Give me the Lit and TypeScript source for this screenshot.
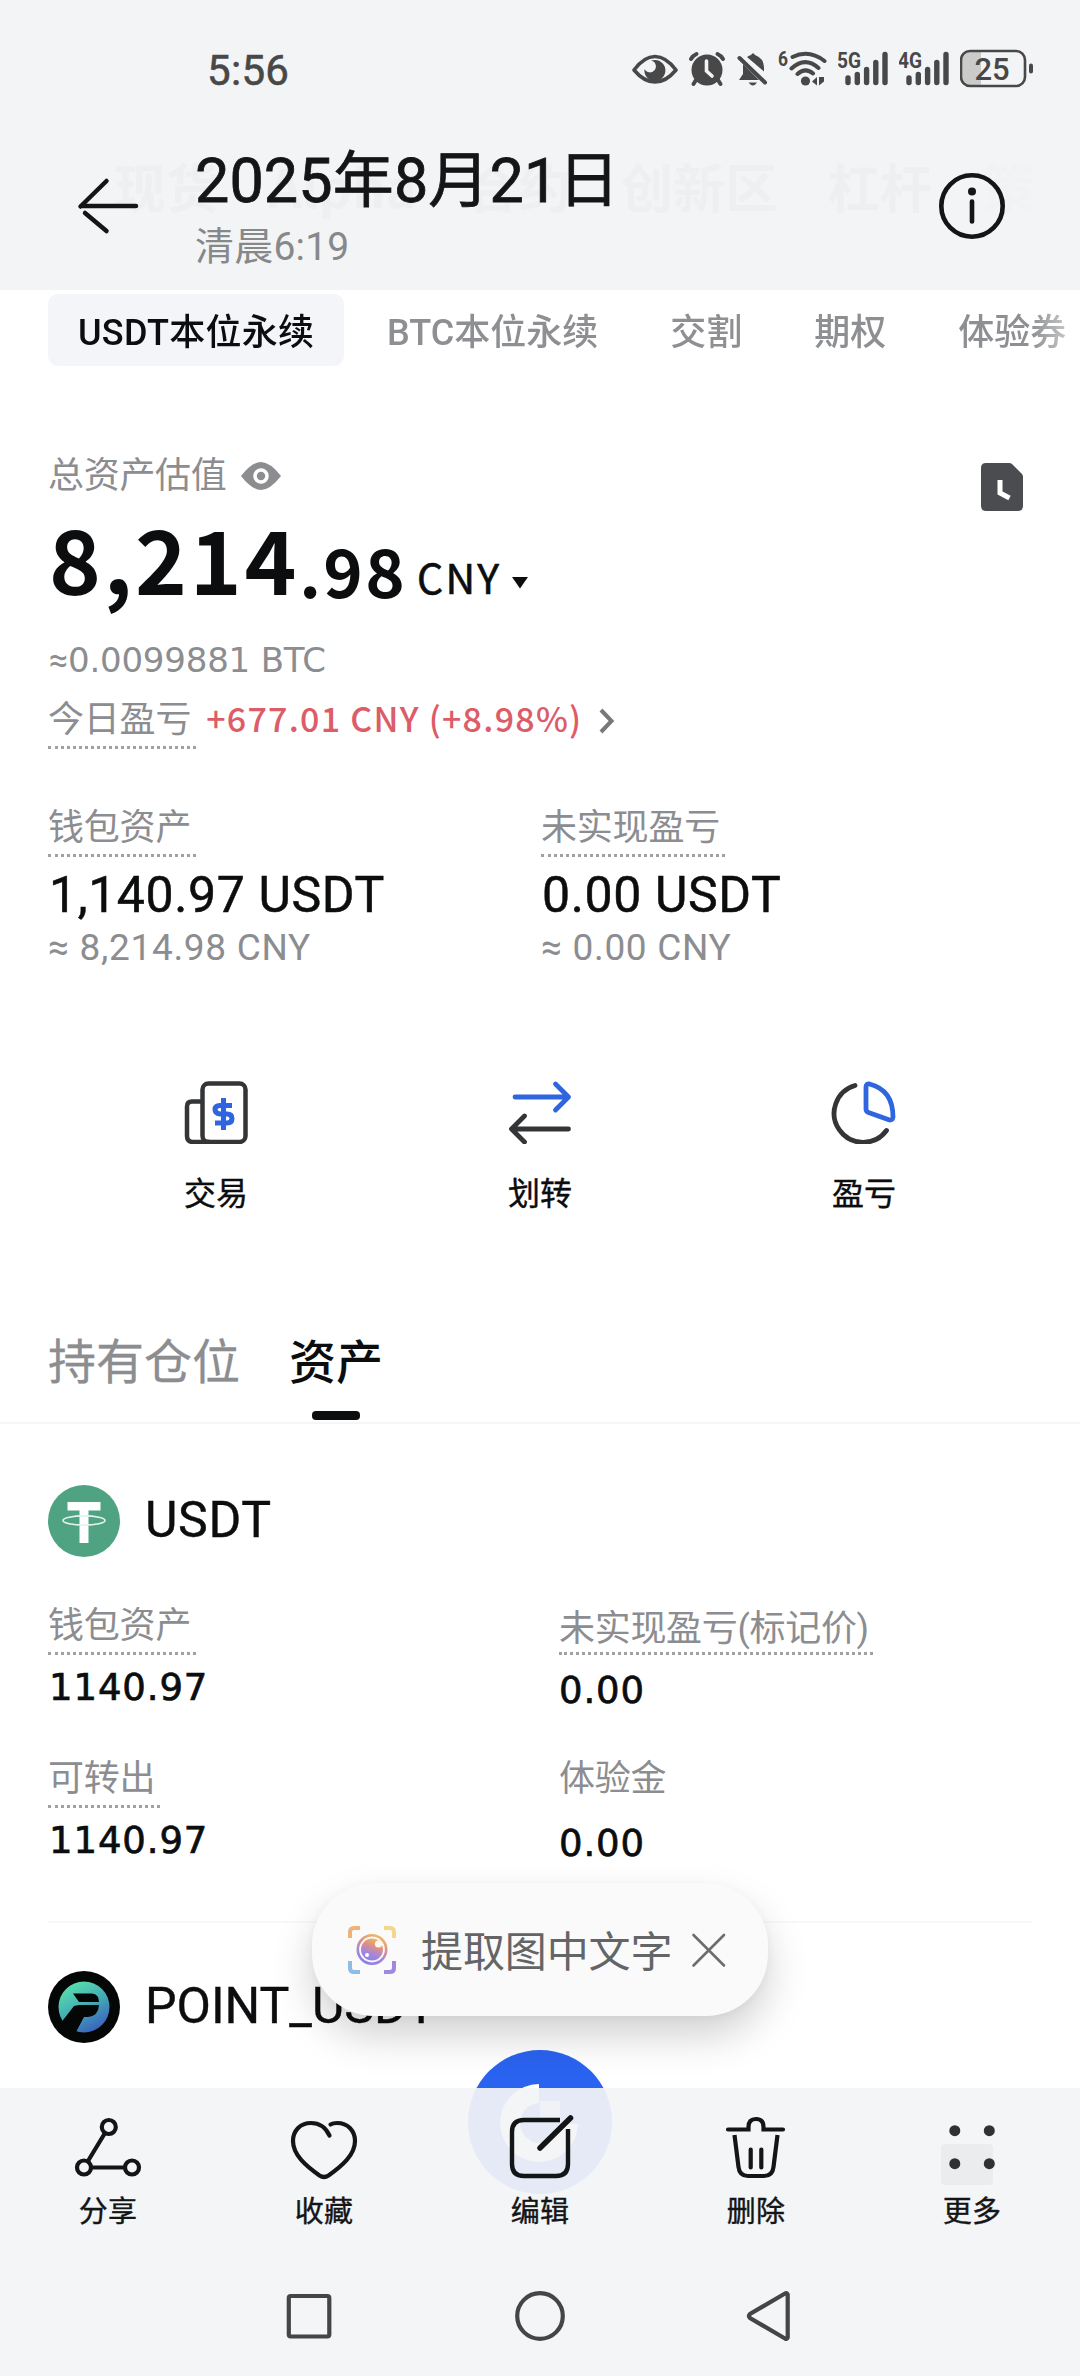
import { LitElement, html, svg, css } from "lit";
import { customElement, property } from "lit/decorators.js";

/** Builds an icon whose drawing units are page pixels, starting at (x, y). */
const icon = (x: number, y: number, w: number, h: number, body: unknown) =>
  html`<svg width=${w} height=${h} viewBox="${x} ${y} ${w} ${h}" aria-hidden="true">${body}</svg>`;

const signal = (x: number, label: string) => svg`
  <text x=${x - 1} y="68" font-size="22" font-weight="700" textLength="24" lengthAdjust="spacingAndGlyphs"
    font-family="Roboto, sans-serif" fill="#484848">${label}</text>
  <g stroke="#484848" stroke-width="5.4" stroke-linecap="round">
    <path d="M${x + 10} 78V82.500M${x + 19.3} 74.500V82.500M${x + 28.6} 69.500V82.500M${x + 37.8} 62.500V82.500M${x + 47} 54.500V82.500"/>
  </g>`;

@customElement("status-bar")
export class StatusBar extends LitElement {
  static styles = css`
    :host { display: flex; height: 138px; padding: 0 46px 0 207px; box-sizing: border-box; justify-content: space-between; }
    svg { display: block; flex: none; }
    .time { font-size: 42px; line-height: 50px; margin-top: 46px; color: #484848; letter-spacing: 0.3px; -webkit-text-stroke: 0.6px #484848; }
    .icons { display: flex; margin-top: 48px; gap: 10px; height: 42px; }
  `;
  render() {
    return html`
      <div class="time">5:56</div>
      <div class="icons">
        ${icon(632, 48, 46, 42, svg`
          <path d="M634 70Q644 56.500 655 56.500T676 70Q666 82 655 82T634 70Z" fill="none" stroke="#484848" stroke-width="3.600" stroke-linejoin="round"/>
          <path d="M655 60a10.500 10.500 0 1 1-10.500 9a6 6 0 1 0 6.500-8.500Q653 60 655 60Z" fill="#484848"/>`)}
        ${icon(689, 48, 38, 42, svg`
          <circle cx="708" cy="70" r="15.500" fill="#484848"/>
          <path d="M697 80L694.500 84M719 80L721.500 84M692 59Q694 55.500 697.500 54M724 59Q722 55.500 718.500 54" stroke="#484848" stroke-width="4" stroke-linecap="round" fill="none"/>
          <path d="M707.500 61V71L713 76" stroke="#f3f4f6" stroke-width="3.600" stroke-linecap="round" fill="none"/>`)}
        ${icon(737, 48, 32, 42, svg`
          <path d="M744 65V74L740 80H760L744 64Z" fill="#484848"/>
          <path d="M748 57Q750 55.500 752 55Q754 51.500 756 55Q764.500 58 765 67V71.500Z" fill="#484848"/>
          <path d="M740.500 58L766 82.500" stroke="#484848" stroke-width="4" stroke-linecap="round"/>
          <path d="M749.500 82.500H758Q754 88.500 749.500 82.500Z" fill="#484848"/>`)}
        ${icon(777, 48, 50, 42, svg`
          <text x="777" y="66" font-size="20" font-weight="700" textLength="10" lengthAdjust="spacingAndGlyphs" font-family="Roboto, sans-serif" fill="#484848">6</text>
          <g fill="none" stroke="#484848" stroke-width="4" stroke-linecap="round">
            <path d="M791.500 57Q808 49 823.500 61M790.500 68.500Q804 56 817.500 68M796.500 74Q804.500 67 812 73.500"/>
          </g>
          <circle cx="804.500" cy="81" r="4.600" fill="#484848"/>
          <path d="M811 81.500L816 77V85.500ZM818 77V85.500L823 81.500V77Z" fill="#484848"/>`)}
        ${icon(836, 48, 51, 42, signal(836, "5G"))}
        ${icon(898, 48, 51, 42, signal(898, "4G"))}
        ${icon(960, 48, 74, 42, svg`
          <path d="M970 52H981V86H970Q962 86 962 78V60Q962 52 970 52Z" fill="#cbcbca"/>
          <rect x="961" y="51" width="64" height="35" rx="9" fill="none" stroke="#484848" stroke-width="2.600"/>
          <path d="M1031 65.500V71.500" stroke="#484848" stroke-width="4" stroke-linecap="round"/>
          <text x="992" y="80" font-size="31" font-weight="500" text-anchor="middle" font-family="Roboto, sans-serif" fill="#484848">25</text>`)}
      </div>`;
  }
}

@customElement("photo-header")
export class PhotoHeader extends LitElement {
  static styles = css`
    :host { display: flex; height: 152px; padding: 0 75px; box-sizing: border-box; }
    svg { display: block; flex: none; }
    .back { margin: 35px 54px 0 0; }
    .titles { flex: 1; }
    .title { font-size: 61px; line-height: 70px; margin-top: 8px; color: #131517; letter-spacing: 0.15px; white-space: nowrap; -webkit-text-stroke: 0.8px #131517; }
    .sub { font-size: 39px; line-height: 46px; margin-top: 8px; color: #87888a; letter-spacing: 0.2px; }
    .info { margin-top: 34px; }
  `;
  render() {
    return html`
      <div class="back">${icon(75, 173, 66, 66, svg`
        <path d="M81 206H136M106.500 181L80.500 206.500M85 213L106.500 231" fill="none" stroke="#131517" stroke-width="4.500" stroke-linecap="round"/>`)}</div>
      <div class="titles">
        <div class="title">2025年8月21日</div>
        <div class="sub">清晨6:19</div>
      </div>
      <div class="info">${icon(939, 172, 66, 68, svg`
        <circle cx="972" cy="206" r="30.700" fill="none" stroke="#131517" stroke-width="4.600"/>
        <circle cx="972" cy="191.500" r="4" fill="#131517"/>
        <path d="M972 201.500V221.500" stroke="#131517" stroke-width="4.600" stroke-linecap="round"/>`)}</div>`;
  }
}

@customElement("hint-label")
export class HintLabel extends LitElement {
  @property({ type: Boolean }) plain = false;
  @property({ type: Boolean }) low = false;
  static styles = css`
    :host { display: inline-block; vertical-align: top; }
    .label { font-size: 36px; line-height: 40px; height: 40px; padding: 3px 5px 6px 0; color: #8c8d90; white-space: nowrap;
      border-bottom: 3px dotted #a0a1a3; letter-spacing: -0.2px; }
    .plain { border-color: transparent; }
    .low { padding: 6px 4px 3px 0; letter-spacing: -0.3px; }
  `;
  render() {
    return html`<div class="label ${this.plain ? "plain" : ""} ${this.low ? "low" : ""}"><slot></slot></div>`;
  }
}

@customElement("asset-field")
export class AssetField extends LitElement {
  @property() label = "";
  @property() value = "";
  @property({ type: Boolean }) plain = false;
  @property({ type: Boolean }) low = false;
  @property({ type: Boolean, reflect: true }) right = false;
  static styles = css`
    :host { display: block; height: 105px; }
    .value { font: 37px/40px "DejaVu Sans", sans-serif; color: #0c0d0e; margin-top: 13px; padding-left: 1px;
      letter-spacing: 0.9px; -webkit-text-stroke: 0.7px #0c0d0e; }
    :host([right]) .value { margin-top: 16px; padding-left: 0; }
  `;
  render() {
    return html`<hint-label ?plain=${this.plain} ?low=${this.low}>${this.label}</hint-label>
      <div class="value">${this.value}</div>`;
  }
}

@customElement("tool-bar")
export class ToolBar extends LitElement {
  static styles = css`
    :host { display: grid; grid-template-columns: repeat(5, 216px); height: 152px; }
    .item { display: flex; flex-direction: column; align-items: center; padding-top: 22px; }
    svg { display: block; }
    .name { font-size: 29px; line-height: 36px; margin-top: 12px; color: #131517; letter-spacing: 0.3px; -webkit-text-stroke: 0.4px #131517; }
  `;
  render() {
    const items = [
      { name: "分享", art: icon(70, 2110, 76, 72, svg`<g fill="none" stroke="#131517" stroke-width="4.200">
        <circle cx="108.800" cy="2127" r="7"/><circle cx="84" cy="2167.500" r="7"/><circle cx="132" cy="2167.500" r="7"/>
        <path d="M105 2133L87.700 2161.500M91 2167.500H125"/></g>`) },
      { name: "收藏", art: icon(286, 2110, 76, 72, svg`<path d="M329.500 2135.500C326 2128 320 2123 311 2123C300 2123 293 2131 293 2141C293 2155 306 2166 319.500 2175.500Q324 2178.500 328.500 2175.500C342 2166 355 2155 355 2141C355 2131 348 2123 337 2123Q333 2123 330.500 2124.500"
        fill="none" stroke="#131517" stroke-width="4.200" stroke-linecap="round"/>`) },
      { name: "编辑", art: icon(502, 2110, 76, 72, svg`<g fill="none" stroke="#131517" stroke-linecap="round">
        <path d="M560 2120H524Q512 2120 512 2132V2164Q512 2176 524 2176H556Q568 2176 568 2164V2129" stroke-width="4.400" stroke-linecap="butt"/>
        <path d="M540 2148L570.500 2118" stroke-width="5.500"/></g>`) },
      { name: "删除", art: icon(718, 2110, 76, 72, svg`<g fill="none" stroke="#131517" stroke-width="4.200" stroke-linecap="round">
        <path d="M728 2129.500H748.500V2127Q748.500 2119 756 2119T763.500 2127V2129.500H783"/>
        <path d="M734.500 2135L738.500 2167Q739.500 2176 748 2176H764Q772.500 2176 773.500 2167L777.500 2135" stroke-linecap="butt"/>
        <path d="M750.700 2149.500V2167.500M761.300 2149.500V2167.500"/></g>`) },
      { name: "更多", art: icon(934, 2110, 76, 72, svg`<g fill="#2f3133">
        <circle cx="954.800" cy="2130.700" r="5.500"/><circle cx="989.300" cy="2130.700" r="5.500"/>
        <circle cx="954.800" cy="2163.700" r="5.500"/><circle cx="989.300" cy="2163.700" r="5.500"/></g>`) },
    ];
    return items.map((i) => html`<div class="item">${i.art}<div class="name">${i.name}</div></div>`);
  }
}

@customElement("nav-bar")
export class NavBar extends LitElement {
  static styles = css`
    :host { display: flex; height: 136px; padding: 0 280px; justify-content: space-between; align-items: flex-start; }
    svg { display: block; margin-top: 44px; }
  `;
  render() {
    return html`
      ${icon(280, 2284, 60, 64, svg`<rect x="288.800" y="2296" width="40.500" height="40.500" rx="2" fill="none" stroke="#444547" stroke-width="4.200"/>`)}
      ${icon(510, 2284, 60, 64, svg`<circle cx="540" cy="2316" r="22.800" fill="none" stroke="#444547" stroke-width="4.200"/>`)}
      ${icon(740, 2284, 60, 64, svg`<path d="M787.700 2294.500V2337.500Q787 2339.500 785 2338.500L750 2318Q748 2316 750 2314L785 2293.500Q787 2292.500 787.700 2294.500Z" fill="none" stroke="#444547" stroke-width="4.200"/>`)}`;
  }
}

@customElement("scan-toast")
export class ScanToast extends LitElement {
  static styles = css`
    :host { display: flex; align-items: center; box-sizing: border-box; width: 456px; height: 133px; border-radius: 62px;
      background: #fafafa; padding: 0 40px 0 34px; box-shadow: 0 20px 40px rgba(0, 0, 0, 0.18), 0 2px 10px rgba(0, 0, 0, 0.04); }
    svg { display: block; flex: none; }
    .text { font-size: 42px; line-height: 50px; margin: 0 17px 0 23px; padding-top: 6px; color: #646567; letter-spacing: -0.1px; white-space: nowrap; }
  `;
  render() {
    return html`
      ${icon(346, 1925, 52, 52, svg`
        <defs>
          <linearGradient id="lens" x1="0.800" y1="0" x2="0.400" y2="1"><stop offset="0" stop-color="#f0bd62"/><stop offset="0.400" stop-color="#dc8f86"/><stop offset="0.700" stop-color="#a787dc"/><stop offset="1" stop-color="#8f80e6"/></linearGradient>
        </defs>
        <g fill="none" stroke-width="4">
          <path d="M350 1939V1933Q350 1929 354 1929H360" stroke="#eeb27a"/><path d="M384 1929H390Q394 1929 394 1933V1939" stroke="#f3d88c"/>
          <path d="M350 1962V1969Q350 1973 354 1973H360" stroke="#8fbbe6"/><path d="M384 1973H390Q394 1973 394 1969V1962" stroke="#9d8ade"/>
        </g>
        <circle cx="372" cy="1950.500" r="14.200" fill="none" stroke="url(#lens)" stroke-width="2.600"/>
        <circle cx="372" cy="1950.500" r="11" fill="url(#lens)"/>
        <circle cx="378.500" cy="1945" r="3.600" fill="#fff6ea"/><circle cx="367" cy="1956" r="2" fill="#fff"/>`)}
      <div class="text">提取图中文字</div>
      ${icon(688, 1931, 40, 40, svg`<path d="M692.500 1936L723 1966.500M723 1936L692.500 1966.500" stroke="#6c6d6f" stroke-width="2.600" stroke-linecap="round"/>`)}`;
  }
}

@customElement("app-root")
export class AppRoot extends LitElement {
  static styles = css`
    :host { display: block; width: 1080px; height: 2376px; position: relative; overflow: hidden; background: #fff;
      font-family: Roboto, "Noto Sans CJK SC", sans-serif; }
    svg { display: block; flex: none; }
    .top { position: relative; height: 290px; background: #f3f4f6; }
    .under { position: absolute; top: 151px; left: 114px; display: flex; gap: 50px; font: 700 52px/70px "Noto Sans CJK SC", sans-serif;
      color: #eeeff1; white-space: nowrap; letter-spacing: 0.2px; }
    .faint { color: #f1f2f4; }
    .front { position: relative; }
    .content { height: 1798px; }
    .tabs { display: flex; align-items: center; gap: 72px; padding: 4px 0 0 48px; height: 72px; font-size: 36px; color: #8e8f92;
      letter-spacing: 0; white-space: nowrap; overflow: hidden; font-weight: 500;
      -webkit-mask-image: linear-gradient(90deg, #000 1030px, rgba(0,0,0,0.4) 1075px); }
    .chip { height: 72px; line-height: 79px; padding: 0 0 0 30px; margin-right: -29px; border-radius: 10px; background: #f4f5f8; color: #0c0d0e; box-sizing: border-box; width: 296px; flex: none; letter-spacing: 0.3px; }
    .tab { line-height: 42px; padding-top: 5px; }
    .summary { display: flex; justify-content: space-between; padding: 87px 57px 0 48px; }
    .history { margin-top: 10px; }
    .caption { display: flex; align-items: center; gap: 14px; margin-top: 3px; font-size: 36px; line-height: 40px; height: 40px; color: #8c8d90; letter-spacing: -0.3px; }
    .balance { display: flex; margin-top: 16px; height: 90px; font: 700 88px/90px "Noto Sans CJK SC", sans-serif; color: #0c0d0e; white-space: nowrap; letter-spacing: 2.800px; padding-left: 1px; }
    .cents { font-size: 67px; vertical-align: -3px; letter-spacing: 2.300px; }
    .unit { font-size: 41px; font-weight: 400; letter-spacing: 2.200px; margin-left: 10px; -webkit-text-stroke: 0.6px #0c0d0e; vertical-align: 1px; }
    .caret { margin: 65px 0 0 10px; }
    .btc { font: 34px/40px "DejaVu Sans", sans-serif; color: #8c8d90; margin-top: 38px; padding-left: 1px; white-space: nowrap; letter-spacing: -0.2px; }
    .about { font-family: Roboto, sans-serif; }
    .pnl { display: flex; margin-top: 17px; height: 52px; }
    .gain { font: 500 34px/40px "Noto Sans CJK SC", sans-serif; color: #dc5c68; margin: 1px 16px 0 10px; letter-spacing: 1.250px; white-space: nowrap; }
    .wallets { display: grid; grid-template-columns: 493px 1fr; padding-left: 48px; margin-top: 56px; }
    .amount { font-size: 50px; line-height: 50px; margin-top: 13px; padding-left: 1px; color: #0c0d0e; letter-spacing: 0.600px; -webkit-text-stroke: 0.5px #0c0d0e; }
    .approx { font-size: 37px; line-height: 40px; margin-top: 8px; color: #8c8d90; letter-spacing: 0.700px; }
    .actions { display: grid; grid-template-columns: repeat(3, 324px); padding: 0 54px; margin-top: 112px; }
    .action { display: flex; flex-direction: column; align-items: center; color: #0c0d0e; height: 131px; }
    .verb { font-size: 32px; line-height: 40px; margin-top: 30px; -webkit-text-stroke: 0.4px #0c0d0e; }
    .sections { display: flex; gap: 49px; padding: 4px 48px 0; margin-top: 118px; height: 89px; border-bottom: 2px solid #f6f6f7; font-size: 48px; line-height: 60px; color: #8c8d90; -webkit-text-stroke: 0.3px #8c8d90; }
    .current { color: #0c0d0e; font-weight: 500; font-size: 47px; -webkit-text-stroke: 0; }
    .mark { width: 48px; height: 9px; border-radius: 4px; background: #0c0d0e; margin: 18px auto 0; }
    .coin { display: flex; align-items: center; gap: 25px; padding-left: 48px; margin-top: 61px; height: 72px; font-size: 50px; color: #0c0d0e; letter-spacing: 0.700px; -webkit-text-stroke: 0.4px #0c0d0e; }
    .coin-name { margin-top: -3px; }
    .point-name { letter-spacing: 0; }
    .fields { display: grid; grid-template-columns: 511px 1fr; row-gap: 48px; padding-left: 48px; margin-top: 46px; }
    .rule { height: 2px; margin: 60px 48px 48px; background: #f8f8f9; }
    .second { margin-top: 0; }
    .fab { position: absolute; left: 468px; top: 2050px; }
    .ghost { position: absolute; left: 941px; top: 2144px; width: 52px; height: 41px; border-radius: 4px; background: #6f8583; }
    .toast { position: absolute; left: 312px; top: 1883px; }
    .bottom { position: relative; background: rgba(243, 244, 246, 0.93); height: 288px; }
  `;
  render() {
    return html`
      <div class="top">
        <div class="under"><span>现货</span><span>Alpha</span><span>合约</span><span>创新区</span><span>杠杆</span><span class="faint">策</span></div>
        <div class="front"><status-bar></status-bar><photo-header></photo-header></div>
      </div>
      <div class="content">
        <div class="tabs"><div class="chip">USDT本位永续</div>
          ${["BTC本位永续", "交割", "期权", "体验券"].map((t) => html`<div class="tab">${t}</div>`)}
        </div>
        <div class="summary">
          <div>
            <div class="caption">总资产估值 ${icon(241, 461, 40, 30, svg`
              <path d="M241 476Q252 462 261 462T281 476Q270 490 261 490T241 476Z" fill="#8c8d90"/>
              <circle cx="261" cy="476" r="6" fill="none" stroke="#fff" stroke-width="3.600"/>`)}</div>
            <div class="balance"><div>8,214<span class="cents">.98</span><span class="unit">CNY</span></div>
              <div class="caret">${icon(513, 578, 18, 12, svg`<path d="M514 578H530L522 589.500Z" fill="#0c0d0e"/>`)}</div></div>
            <div class="btc"><span class="about">≈</span>0.0099881 BTC</div>
            <div class="pnl"><hint-label>今日盈亏</hint-label><div class="gain">+677.01 CNY (+8.98%)</div>
              ${icon(597, 697, 18, 48, svg`<path d="M600 710L610.500 721L600 732" fill="none" stroke="#77787b" stroke-width="4"/>`)}</div>
          </div>
          <div class="history">${icon(981, 463, 42, 48, svg`
            <path d="M986 463H1009Q1011 463 1012 464L1022 474Q1023 475 1023 477V506Q1023 511 1018 511H986Q981 511 981 506V468Q981 463 986 463Z" fill="#4b4c50"/>
            <path d="M1000 480V493L1009.500 498" fill="none" stroke="#fff" stroke-width="5"/>`)}</div>
        </div>
        <div class="wallets">
          <div><hint-label>钱包资产</hint-label><div class="amount">1,140.97 USDT</div><div class="approx">≈ 8,214.98 CNY</div></div>
          <div><hint-label>未实现盈亏</hint-label><div class="amount">0.00 USDT</div><div class="approx">≈ 0.00 CNY</div></div>
        </div>
        <div class="actions">
          <div class="action">${icon(184, 1080, 64, 64, svg`<g fill="none" stroke="#333537" stroke-width="4.500">
            <rect x="202.500" y="1083.500" width="43" height="58.500" rx="6"/><path d="M202.500 1101.500H192Q187 1101.500 187 1106.500V1136Q187 1142 193 1142H210"/></g>
            <path d="M223.500 1098V1130M232 1105.500H220Q215 1105.500 215 1109.500T220 1114H227Q232 1114 232 1118.500T227 1123H215" fill="none" stroke="#2f66e0" stroke-width="5"/>`)}<div class="verb">交易</div></div>
          <div class="action">${icon(508, 1080, 64, 64, svg`<g fill="none" stroke-width="4.800" stroke-linecap="round" stroke-linejoin="round">
            <path d="M515 1097H568M555.500 1084L568.500 1097L555.500 1110" stroke="#2f66e0"/><path d="M568.500 1129H513M524.500 1116L511.500 1129L524.500 1142" stroke="#333537"/></g>`)}<div class="verb">划转</div></div>
          <div class="action">${icon(831, 1080, 66, 64, svg`<g fill="none" stroke-width="4.800" stroke-linecap="round" stroke-linejoin="round">
            <path d="M855 1085.500A29 29 0 1 0 886.500 1130.500" stroke="#333537"/><path d="M866 1087Q866 1083.500 869.500 1084Q893 1090 893 1117Q892.500 1120.500 889.500 1120L868.500 1112.500Q866 1111.500 866 1109Z" stroke="#2f66e0"/></g>`)}<div class="verb">盈亏</div></div>
        </div>
        <div class="sections"><div>持有仓位</div><div class="current">资产<div class="mark"></div></div></div>
        <div class="coin">${icon(48, 1485, 72, 72, svg`<circle cx="84" cy="1521" r="36" fill="#4fa383" stroke="none"/>
          <path d="M67.500 1502H100.500V1510.500H88.500V1543H79.500V1510.500H67.500Z" fill="#fff" stroke="none"/>
          <ellipse cx="84" cy="1520.500" rx="21" ry="4.600" fill="none" stroke="#e4f3ed" stroke-width="1.600"/>`)}<div class="coin-name">USDT</div></div>
        <div class="fields">
          <asset-field label="钱包资产" value="1140.97"></asset-field>
          <asset-field label="未实现盈亏(标记价)" value="0.00" low right></asset-field>
          <asset-field label="可转出" value="1140.97"></asset-field>
          <asset-field label="体验金" value="0.00" plain right></asset-field>
        </div>
        <div class="rule"></div>
        <div class="coin second">${icon(48, 1971, 72, 72, svg`
          <defs><linearGradient id="pt" x1="0.200" y1="0.100" x2="0.700" y2="1"><stop offset="0" stop-color="#55dcae"/><stop offset="0.500" stop-color="#43a8b4"/><stop offset="1" stop-color="#3a5fc0"/></linearGradient></defs>
          <circle cx="84" cy="2007" r="36" fill="#050606"/><circle cx="84" cy="2007" r="25.500" fill="url(#pt)"/>
          <path d="M73 1993.500H92Q99 1994 99 2002H79ZM79 2005H99Q98.500 2016 88 2017H84L76 2032L60 2024L74 2006Z" fill="#050606"/>`)}<div class="coin-name point-name">POINT_USDT</div></div>
      </div>
      <div class="fab">${icon(468, 2050, 144, 144, svg`<circle cx="540" cy="2122" r="72" fill="#2a63f0"/>
        <path d="M539 2084V2103A20 20 0 1 0 560 2124H578A39 39 0 1 1 539 2084Z" fill="#fff"/>
        <path d="M540 2101H560V2117H540Z" fill="#fff" opacity="0.700"/>`)}</div>
      <div class="ghost"></div>
      <scan-toast class="toast"></scan-toast>
      <div class="bottom"><tool-bar></tool-bar><nav-bar></nav-bar></div>`;
  }
}
